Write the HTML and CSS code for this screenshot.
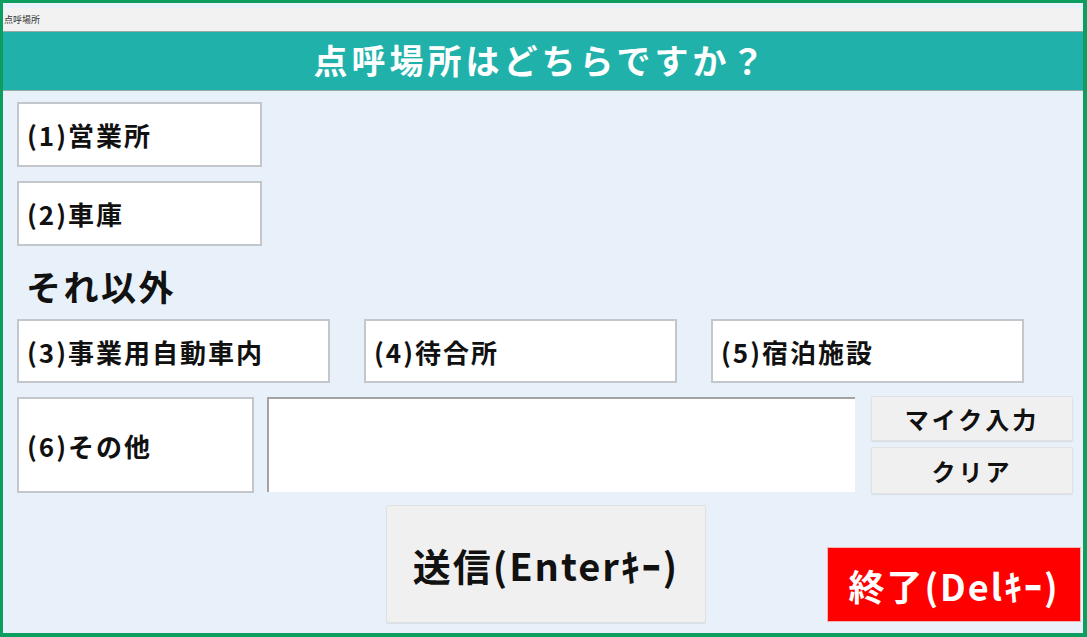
FILE: index.html
```html
<!DOCTYPE html>
<html lang="ja">
<head>
<meta charset="utf-8">
<title>点呼場所</title>
<link rel="stylesheet" href="styles.css">
</head>
<body>
<div class="frame">
  <div class="window">
    <div class="titlebar">点呼場所</div>
    <div class="header">点呼場所はどちらですか？</div>
    <div class="content">
      <div class="opt opt-small">(1)営業所</div>
      <div class="opt opt-small row2">(2)車庫</div>
      <div class="section">それ以外</div>
      <div class="row3">
        <div class="opt opt-wide">(3)事業用自動車内</div>
        <div class="opt opt-wide">(4)待合所</div>
        <div class="opt opt-wide">(5)宿泊施設</div>
      </div>
      <div class="row4">
        <div class="opt opt-other">(6)その他</div>
        <div class="textbox"></div>
        <div class="side">
          <div class="btn btn-side">マイク入力</div>
          <div class="btn btn-side btn-clear">クリア</div>
        </div>
      </div>
      <div class="row5">
        <div class="btn btn-send">送信(Enterｷｰ)</div>
        <div class="btn-exit">終了(Delｷｰ)</div>
      </div>
    </div>
  </div>
</div>
</body>
</html>
```

FILE: styles.css
```css
* { box-sizing: border-box; }
html, body {
  margin: 0;
  padding: 0;
  width: 1087px;
  height: 637px;
  overflow: hidden;
  font-family: "Noto Sans CJK JP", "Noto Sans", sans-serif;
}
.frame {
  width: 1087px;
  height: 637px;
  border-style: solid;
  border-color: #0b9e5f;
  border-width: 3px 4px 4px 3px;
  background: #e8f0f9;
}
.window {
  height: 100%;
  display: flex;
  flex-direction: column;
}
.titlebar {
  margin: 5px 2px 0 1px;
  height: 23px;
  background: #f2f2f2;
  font-size: 9px;
  line-height: 23px;
  color: #333;
}
.header {
  height: 60px;
  background: #20b2aa;
  border-top: 1px solid #9aa8a6;
  border-bottom: 1px solid #9aa8a6;
  color: #fff;
  font-weight: 700;
  font-size: 34px;
  letter-spacing: 4px;
  line-height: 56px;
  text-align: center;
  padding-right: 4px;
}
.content {
  padding: 11px 0 0 14px;
  display: flex;
  flex-direction: column;
}
.opt {
  background: #fff;
  border: 2px solid #c3c6ca;
  font-weight: 700;
  font-size: 26px;
  letter-spacing: 2px;
  color: #111;
  display: flex;
  align-items: center;
  padding-left: 8px;
}
.opt-small { width: 245px; height: 65px; }
.row2 { margin-top: 14px; }
.section {
  margin-top: 20px;
  height: 40px;
  line-height: 40px;
  margin-bottom: 13px;
  padding-left: 9px;
  font-weight: 700;
  font-size: 35px;
  letter-spacing: 2.5px;
  color: #111;
}
.row3 {
  display: flex;
  gap: 34px;
}
.opt-wide { width: 313px; height: 64px; }
.row4 {
  margin-top: 13px;
  display: flex;
  align-items: flex-start;
  height: 98px;
}
.opt-other {
  margin-top: 1px;
  width: 237px;
  height: 96px;
}
.textbox {
  margin-top: 1px;
  margin-left: 13px;
  width: 588px;
  height: 95px;
  background: #fff;
  border-top: 2px solid #a3a3a3;
  border-left: 2px solid #a3a3a3;
}
.side {
  margin-left: 16px;
  display: flex;
  flex-direction: column;
  gap: 6px;
  width: 202px;
}
.btn {
  background: #f0f0f0;
  border: 1px solid #e1e1e1;
  border-radius: 2px;
  box-shadow: 0 1px 1px rgba(0,0,0,0.08);
  color: #111;
  font-weight: 700;
  display: flex;
  align-items: center;
  justify-content: center;
}
.btn-side {
  height: 45px;
  font-size: 24px;
  letter-spacing: 3px;
}
.btn-clear { height: 47px; }
.row5 {
  margin-top: 11px;
  display: flex;
  align-items: flex-start;
}
.btn-send {
  margin-left: 369px;
  width: 320px;
  height: 118px;
  font-size: 38px;
  letter-spacing: 2px;
}
.btn-exit {
  margin-left: auto;
  margin-right: 2px;
  margin-top: 42px;
  width: 254px;
  height: 75px;
  background: #ff0000;
  border: 1px solid #f4b4b4;
  color: #fff;
  font-weight: 700;
  font-size: 36px;
  letter-spacing: 2px;
  display: flex;
  align-items: center;
  justify-content: center;
}
```
